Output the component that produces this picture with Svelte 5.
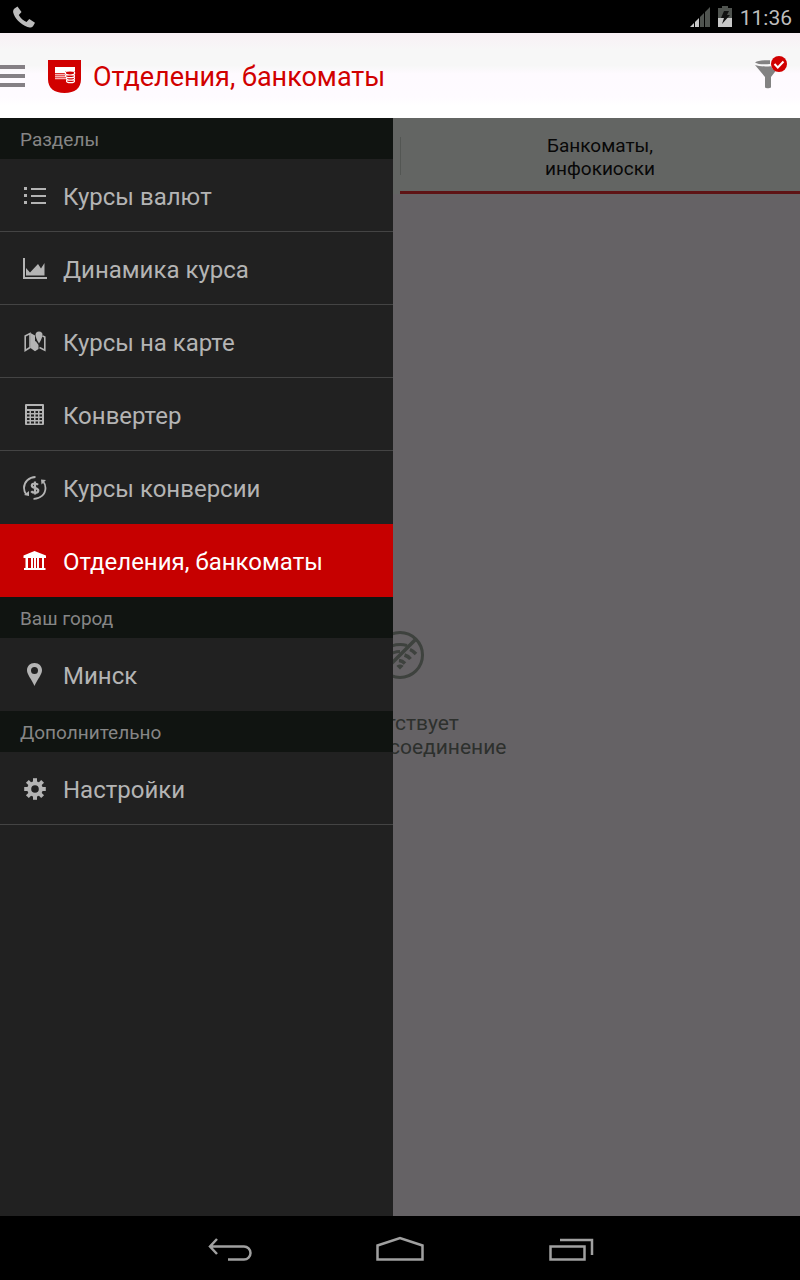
<script>
  const groups = [
    {
      title: 'Разделы',
      items: [
        { label: 'Курсы валют', icon: 'list' },
        { label: 'Динамика курса', icon: 'chart' },
        { label: 'Курсы на карте', icon: 'map' },
        { label: 'Конвертер', icon: 'calculator' },
        { label: 'Курсы конверсии', icon: 'exchange' },
        { label: 'Отделения, банкоматы', icon: 'bank' },
      ],
    },
    { title: 'Ваш город', items: [{ label: 'Минск', icon: 'pin' }] },
    { title: 'Дополнительно', items: [{ label: 'Настройки', icon: 'gear' }] },
  ];
  let active = $state('bank');
</script>

{#snippet icon(name)}
  <svg class="icon" width="24" height="24" viewBox="0 0 24 24" fill="currentColor" aria-hidden="true">
    {#if name === 'list'}
      <path d="M1 3h3v3H1zM8 4h15v2H8zM1 10h3v3H1zM8 11h15v2H8zM1 17h3v3H1zM8 18h15v2H8z" />
    {:else if name === 'chart'}
      <path d="M0 1h2v19h22v2H0zM3 11l4 4.500 8-8.500 3 4.500L21.500 6v12.500H3z" />
    {:else if name === 'map'}
      <path d="M2.200 6L7 3.500v14L2.200 20.500z" fill="none" stroke="currentColor" stroke-width="1.600" />
      <path d="M7.500 3l4.500 2.500v15.800L7.500 18z" />
      <path d="M13 11.500l2.500 3.500v4L12 21.300V11z" />
      <path d="M19.500 6l2.300 1v13.200L16.500 17.500" fill="none" stroke="currentColor" stroke-width="1.600" />
      <path d="M16 1.500A3.500 3.500 0 0 1 19.500 5C19.500 8 16 13.500 16 13.500S12.500 8 12.500 5A3.500 3.500 0 0 1 16 1.500z" />
    {:else if name === 'calculator'}
      <path
        fill-rule="evenodd"
        d="M3 1h17a1 1 0 0 1 1 1v19a1 1 0 0 1-1 1H3a1 1 0 0 1-1-1V2a1 1 0 0 1 1-1zM4 3v3h15V3zM4 8v2h2.500V8zM8 8v2h3V8zM12.500 8v2h2.500V8zM16.500 8v2H19V8zM4 11.500v2h2.500v-2zM8 11.500v2h3v-2zM12.500 11.500v2h2.500v-2zM16.500 11.500v2H19v-2zM4 15v2h2.500v-2zM8 15v2h3v-2zM12.500 15v2h2.500v-2zM16.500 15v2H19v-2zM4 18.500v2h2.500v-2zM8 18.500v2h3v-2zM12.500 18.500v2h2.500v-2zM16.500 18.500v2H19v-2z"
      />
    {:else if name === 'exchange'}
      <g fill="none" stroke="currentColor" stroke-width="1.800">
        <path d="M12.500 1C6 1 1 6 1 12c0 2.500.8 4.500 2.300 6.500" />
        <path d="M10.500 22.800C17 23 22.500 18.500 22.500 12c0-2-.5-4.300-2-6" />
        <path d="M15 8.800C14 7.700 13 7.500 11.800 7.500c-2 0-3 .9-3 2.200 0 3 6.500 1.600 6.500 4.700 0 1.500-1.500 2.300-3.300 2.300-1.500 0-3-.5-3.800-1.500M12 5.500v13" stroke-width="2.200" />
      </g>
      <path d="M1 19l5-4v5zM18 3.500l5 .5-4.500 4.500z" />
    {:else if name === 'bank'}
      <path d="M11.500 2L23 6.500V9h-2v10h1.500v2H1v-2h1.500V9H.500V6.500zM5 9v10h3V9zM10 9v10h1V9zM13 9v10h1V9zM16 9v10h3V9z" fill-rule="evenodd" />
    {:else if name === 'pin'}
      <path d="M11.500 0C16 0 19 3.200 19 7.300c0 4.500-4.500 8.700-7.500 15.700C8.500 16 4 11.800 4 7.300 4 3.200 7 0 11.500 0zm0 4a3.500 3.500 0 1 0 0 7 3.500 3.500 0 0 0 0-7z" fill-rule="evenodd" />
    {:else if name === 'gear'}
      <circle cx="12" cy="12" r="5.800" fill="none" stroke="currentColor" stroke-width="4" />
      <g>
        {#each [0, 45, 90, 135, 180, 225, 270, 315] as angle}
          <path d="M10 1.200h4v4H10z" transform="rotate({angle} 12 12)" />
        {/each}
      </g>
    {/if}
  </svg>
{/snippet}

<div class="screen">
  <div class="status">
    <svg width="24" height="24" viewBox="0 0 24 24" fill="#bcbcbc" role="img" aria-label="Звонок">
      <path d="M2.500 3.500L5.500 1.500 9.500 7 6.800 10c1.700 3.200 4.600 5.500 7.700 7l2.800-3 5.700 3.800-2 3.500c-1 1.300-3.500 1.700-5.500.8C8 19 2.500 13 1.200 7.500c-.3-1.700.2-3 1.300-4z" />
    </svg>
    <div class="status-right">
      <svg width="22" height="22" viewBox="0 0 22 22" role="img" aria-label="Сеть">
        <path d="M0 21l4-4v4zM5 16l4-4v9H5z" fill="#c8c8c8" />
        <path d="M10 11l4-4v14h-4zM15 6l5-5v20h-5z" fill="#505450" />
      </svg>
      <svg width="14" height="22" viewBox="0 0 14 22" role="img" aria-label="Батарея">
        <path d="M4 0h6v2h4v10H0V2h4z" fill="#505450" />
        <path d="M0 12h14v9H0z" fill="#c8c8c8" />
        <path d="M6 5h5l-2 4h3l-8 9 2-6H3z" fill="#111" />
      </svg>
      <time>11:36</time>
    </div>
  </div>

  <header>
    <button class="bare burger" aria-label="Меню"><i></i><i></i><i></i></button>
    <svg width="34" height="34" viewBox="0 0 34 34" aria-hidden="true">
      <path d="M0 0h33v19c0 9-6 14-16.500 14S0 28 0 19z" fill="#d10000" />
      <path d="M7 7h20v4.500H7z" fill="#fff" />
      <path d="M7 11h10v2H7z" fill="#fff" />
      <path d="M7 14.500h10M7 16.500h10M7 18.500h11" stroke="#f8b0b0" stroke-width="1.300" />
      <g fill="#d10000" stroke="#fff" stroke-width="1.200">
        <ellipse cx="22.500" cy="21" rx="4" ry="1.700" />
        <ellipse cx="22.500" cy="18.500" rx="4" ry="1.700" />
        <ellipse cx="22" cy="16" rx="4.500" ry="1.700" />
        <ellipse cx="22" cy="13" rx="4.700" ry="2" />
      </g>
    </svg>
    <h1>Отделения, банкоматы</h1>
    <button class="bare filter" aria-label="Фильтр">
      <svg width="34" height="34" viewBox="0 0 34 34">
        <g fill="#828282">
          <path d="M1 6.500C4 4.500 10 4 16 4.300V8C10 8.500 4 8.500 1 6.500z" />
          <path d="M1 9c4 1.500 10 1.700 16 1.200 1.500 2.500 3 3.800 5 4.300L17 21v10.500c-1.500 1-5 1-6 0V21z" />
        </g>
        <circle cx="25" cy="8" r="8" fill="#d10000" />
        <path d="M20.500 8l3.300 3.500 5.700-6" fill="none" stroke="#fff" stroke-width="2" />
      </svg>
    </button>
  </header>

  <div class="body">
    <main>
      <div class="tabs">
        <button class="bare tab">Банкоматы,<br />инфокиоски</button>
      </div>
      <div class="empty">
        <svg width="48" height="48" viewBox="0 0 48 48" fill="none" stroke="#3e423e" aria-hidden="true">
          <circle cx="24" cy="24" r="22.500" stroke-width="3" />
          <path d="M8 40L40 8" stroke-width="3.500" />
          <path d="M8 19c8-5.500 16-6.500 23-4.500M12 25c4-3.500 8-4.500 12-4.500" stroke-width="3" />
          <path d="M34 18.500c2.500 1 4 2.500 6 4.500M28.500 24c2.500.8 4.500 2 6 4M23 29.500c2.500.3 4.500 1.500 6 3" stroke-width="3.500" />
          <path d="M20.500 35c1.500-2 5.500-2 7 0L24 38.500z" fill="#3e423e" stroke="none" />
        </svg>
        <p>Отсутствует<br />интернет-соединение</p>
      </div>
    </main>

    <nav class="drawer" aria-label="Разделы">
      {#each groups as group}
        <h2>{group.title}</h2>
        <ul>
          {#each group.items as item}
            <li>
              <button class="bare row" class:active={active === item.icon} onclick={() => (active = item.icon)}>
                {@render icon(item.icon)}
                <span>{item.label}</span>
              </button>
            </li>
          {/each}
        </ul>
      {/each}
    </nav>
  </div>

  <footer>
    <button class="bare" aria-label="Назад">
      <svg width="48" height="28" viewBox="0 0 48 28">
        <path d="M12 3L5 10.500l7 7.500M5 10.500h34a6.500 6.500 0 0 1 0 13H23" />
      </svg>
    </button>
    <button class="bare" aria-label="Домой">
      <svg width="48" height="28" viewBox="0 0 48 28">
        <path d="M1.500 9.500L24 2l22.500 7.500v14h-45z" />
      </svg>
    </button>
    <button class="bare" aria-label="Недавние">
      <svg width="48" height="28" viewBox="0 0 48 28">
        <path d="M3.500 10.500h34v13h-34zM13 4h32v15" />
      </svg>
    </button>
  </footer>
</div>

<style>
  :global(body) {
    margin: 0;
    background: #000;
  }
  .screen {
    display: flex;
    flex-direction: column;
    min-height: 100vh;
    font-family: Roboto, sans-serif;
  }
  .bare {
    margin: 0;
    padding: 0;
    border: 0;
    background: none;
    color: inherit;
    font: inherit;
    cursor: pointer;
  }
  svg {
    display: block;
    flex: none;
  }
  h1,
  h2,
  p,
  ul {
    margin: 0;
    padding: 0;
    font-weight: 400;
  }
  ul {
    list-style: none;
  }
  .status {
    display: flex;
    align-items: center;
    justify-content: space-between;
    height: 33px;
    padding: 0 8px 0 12px;
    background: #000;
  }
  .status-right {
    display: flex;
    align-items: center;
    gap: 6px;
  }
  time {
    padding: 2px 0 0 2px;
    color: #bebebe;
    font-size: 21px;
    line-height: 24px;
  }
  header {
    box-sizing: border-box;
    display: flex;
    align-items: center;
    height: 85px;
    padding-top: 2px;
    background: linear-gradient(#f8f0f5, #f7f7f7 20%, #f7f7f7 38%, #fefaff 48%, #fefbff 75%, #fff 85%);
  }
  .burger {
    display: grid;
    gap: 5px;
    width: 25px;
    margin-right: 23px;
    padding-bottom: 2px;
  }
  .burger i {
    height: 4px;
    background: #858085;
  }
  h1 {
    flex: 1;
    padding-left: 11px;
    color: #d10000;
    font-size: 27px;
    line-height: 32px;
  }
  .filter {
    margin: 0 12px 8px 0;
  }
  .body {
    position: relative;
    display: flex;
    flex: 1;
    background: #656265;
  }
  main {
    display: flex;
    flex: 1;
    flex-direction: column;
  }
  .tabs {
    display: grid;
    grid-template-columns: 1fr 1fr;
    background: #636563;
  }
  .tab {
    grid-column: 2;
    padding: 16px 0 11px;
    border-bottom: 3px solid #5e1315;
    background: linear-gradient(#535653, #535653) left 19px / 1px 38px no-repeat;
    color: #080808;
    font-size: 19px;
    line-height: 23px;
  }
  .empty {
    display: flex;
    flex: 1;
    flex-direction: column;
    align-items: center;
    justify-content: center;
    gap: 32px;
    padding-bottom: 20px;
    color: #2d302d;
    font-size: 21px;
    line-height: 24px;
    text-align: center;
  }
  .drawer {
    position: absolute;
    top: 0;
    bottom: 0;
    left: 0;
    width: 393px;
    background: #212121;
  }
  h2 {
    padding: 10px 20px 7px;
    background: #101411;
    color: #868686;
    font-size: 19px;
    line-height: 24px;
  }
  li {
    border-bottom: 1px solid #444;
  }
  .row {
    display: flex;
    align-items: center;
    gap: 16px;
    width: 100%;
    height: 72px;
    padding: 2px 23px 0;
    color: #b4b4b4;
    font-size: 24px;
    line-height: 30px;
    text-align: left;
  }
  .row span {
    padding-top: 1px;
  }
  li:has(.active) {
    border-color: #c60000;
  }
  li:has(+ li .active),
  li:only-child {
    border-color: #212121;
  }
  ul:last-child li {
    border-color: #444;
  }
  .active {
    background: #c60000;
    color: #fff;
  }
  footer {
    box-sizing: border-box;
    display: flex;
    align-items: center;
    justify-content: center;
    gap: 123px;
    height: 64px;
    padding-top: 4px;
    background: #000;
  }
  footer path {
    fill: none;
    stroke: #a0a0a0;
    stroke-width: 2.500;
  }
</style>
